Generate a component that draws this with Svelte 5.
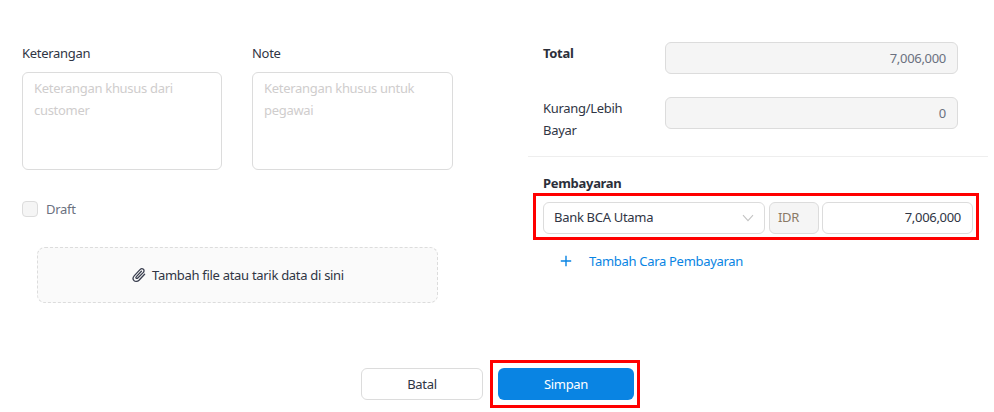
<script>
  const notes = [
    { label: 'Keterangan', hint: 'Keterangan khusus dari customer' },
    { label: 'Note', hint: 'Keterangan khusus untuk pegawai' }
  ];
</script>

<div class="page">
  <div class="columns">
    <section class="left">
      <div class="notes">
        {#each notes as n}
          <div class="note">
            <div class="label">{n.label}</div>
            <div class="area">{n.hint}</div>
          </div>
        {/each}
      </div>

      <div class="check">
        <span class="box"></span>
        <span>Draft</span>
      </div>

      <div class="drop">
        <svg width="16" height="16" viewBox="0 0 16 16" fill="none" stroke="#3a3f4f" stroke-width="1.3" stroke-linecap="round" stroke-linejoin="round">
          <path d="M13.6 7.2 8 13.2c-1.5 1.5-3.8 1.6-5 .4s-1.1-3.4.4-5l5.6-6c1-1 2.5-1.1 3.4-.3s.8 2.3-.2 3.3L6.8 11c-.5.5-1.2.6-1.6.2s-.3-1.1.2-1.6l5-5.3"/>
        </svg>
        <span>Tambah file atau tarik data di sini</span>
      </div>
    </section>

    <section class="right">
      <div class="row first">
        <div class="side bold">Total</div>
        <div class="readonly">7,006,000</div>
      </div>
      <div class="row second">
        <div class="side">Kurang/Lebih Bayar</div>
        <div class="readonly">0</div>
      </div>

      <div class="pay">
        <div class="bold pay-title">Pembayaran</div>
        <div class="mark pay-mark">
          <div class="field select">
            <span class="chosen">Bank BCA Utama</span>
            <svg width="12" height="8" viewBox="0 0 12 8" fill="none" stroke="#c4c4c4" stroke-width="1.1">
              <path d="M1 1.2 6 6.6l5-5.4"/>
            </svg>
          </div>
          <div class="field idr">IDR</div>
          <div class="field amount">7,006,000</div>
        </div>
        <div class="add">
          <svg width="12" height="12" viewBox="0 0 12 12" fill="none" stroke="#0984e3" stroke-width="1.4">
            <path d="M6 .8v10.4M.8 6h10.4"/>
          </svg>
          <span>Tambah Cara Pembayaran</span>
        </div>
      </div>
    </section>
  </div>

  <footer>
    <button class="cancel">Batal</button>
    <div class="mark save-mark">
      <button class="save">Simpan</button>
    </div>
  </footer>
</div>

<style>
  :global(body) {
    background: #fff;
    font-family: "Noto Sans", "Open Sans", sans-serif;
    font-size: 13px;
    letter-spacing: -0.3px;
    color: #2f3544;
  }

  .page {
    width: 994px;
    height: 412px;
    overflow: hidden;
    box-sizing: border-box;
    padding-top: 42px;
  }

  .columns {
    display: flex;
    height: 318px;
  }

  .left {
    width: 506px;
    margin-left: 22px;
  }

  .notes {
    display: flex;
    gap: 30px;
  }

  .note {
    width: 200px;
  }

  .note:last-child {
    width: 201px;
  }

  .label {
    line-height: 22px;
    margin-bottom: 8px;
  }

  .area {
    box-sizing: border-box;
    height: 98px;
    border: 1px solid #dcdcdc;
    border-radius: 6px;
    padding: 4px 11px;
    line-height: 22px;
    color: #cfcdcd;
  }

  .check {
    display: flex;
    align-items: center;
    gap: 8px;
    margin-top: 30px;
    color: #6b7180;
  }

  .box {
    box-sizing: border-box;
    width: 16px;
    height: 16px;
    background: #f5f5f5;
    border: 1px solid #dcdcdc;
    border-radius: 4px;
  }

  .drop {
    box-sizing: border-box;
    display: flex;
    align-items: center;
    justify-content: center;
    gap: 5px;
    width: 401px;
    height: 56px;
    margin: 29px 0 0 15px;
    background: #fafafa;
    border: 1px dashed #dcdcdc;
    border-radius: 8px;
  }

  .right {
    width: 460px;
  }

  .row {
    display: flex;
    padding: 0 30px 0 15px;
  }

  .second {
    margin-top: 23px;
    padding-bottom: 15px;
    border-bottom: 1px solid #eee;
  }

  .side {
    width: 122px;
    line-height: 22px;
    padding-right: 20px;
    box-sizing: border-box;
  }

  .bold {
    font-weight: 700;
    color: #2b2f3a;
  }

  .readonly {
    box-sizing: border-box;
    width: 293px;
    height: 32px;
    line-height: 30px;
    text-align: right;
    padding: 0 11px;
    background: #f5f5f5;
    border: 1px solid #dcdcdc;
    border-radius: 6px;
    color: #6b7180;
  }

  .pay {
    padding-top: 16px;
  }

  .pay-title {
    margin-left: 15px;
    line-height: 20px;
  }

  .mark {
    box-sizing: border-box;
    border: 3px solid #f00;
  }

  .pay-mark {
    display: flex;
    width: 446px;
    height: 47px;
    margin: 0 0 0 5px;
    padding: 6px 3px 3px 7px;
  }

  .field {
    box-sizing: border-box;
    height: 32px;
    line-height: 29px;
    border: 1px solid #dcdcdc;
    border-radius: 6px;
    padding: 0 10px;
  }

  .select {
    display: flex;
    align-items: center;
    justify-content: space-between;
    width: 222px;
  }

  .chosen {
    margin-bottom: 1px;
  }

  .idr {
    width: 50px;
    margin-left: 4px;
    padding: 0 8px;
    background: #f5f5f5;
    color: #8a7a66;
  }

  .amount {
    width: 151px;
    margin-left: 3px;
    text-align: right;
    padding: 0 11px;
  }

  .add {
    display: flex;
    align-items: center;
    gap: 17px;
    margin: 11px 0 0 32px;
    line-height: 20px;
    color: #0984e3;
  }

  footer {
    display: flex;
    justify-content: center;
    align-items: center;
    gap: 7px;
    margin-left: 7px;
  }

  button {
    box-sizing: border-box;
    height: 32px;
    font: inherit;
    letter-spacing: inherit;
    border-radius: 6px;
  }

  .cancel {
    width: 122px;
    background: #fff;
    border: 1px solid #dcdcdc;
    color: #2f3544;
  }

  .save-mark {
    width: 150px;
    height: 48px;
    padding: 5px 3px 5px 5px;
  }

  .save {
    width: 136px;
    background: #0984e3;
    border: 0;
    color: #fff;
  }
</style>
